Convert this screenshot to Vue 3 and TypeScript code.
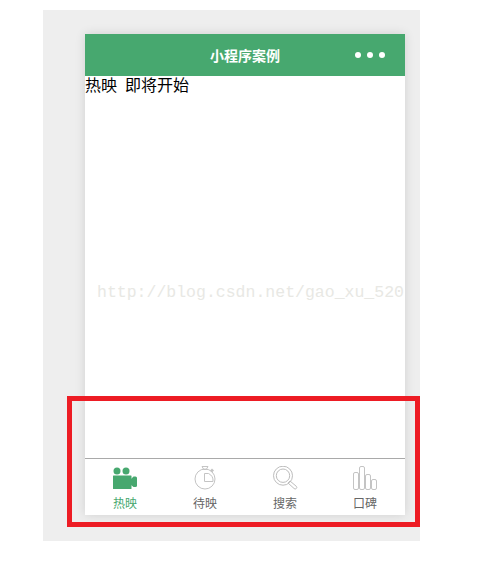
<template>
  <div class="shot">
    <div class="phone">
      <header class="nav">
        <span class="nav-title">小程序案例</span>
        <div class="nav-dots"><i></i><i></i><i></i></div>
      </header>
      <main class="content">
        <div class="line">热映 即将开始</div>
        <div class="watermark">http://blog.csdn.net/gao_xu_520</div>
      </main>
      <footer class="tabs">
        <div v-for="tab in tabs" :key="tab.name" class="tab" :class="{ active: tab.active }">
          <svg class="tab-icon" width="28" height="26" viewBox="0 0 28 26">
            <template v-if="tab.name === '热映'">
              <circle cx="6" cy="5" r="3.5" fill="#47a86f" />
              <circle cx="15" cy="5" r="3.5" fill="#47a86f" />
              <rect x="2" y="9.5" width="18.5" height="13.5" rx="0.5" fill="#47a86f" />
              <path d="M20 13l2.5-2.5h2a1.5 1.5 0 0 1 1.5 1.5v7.5a1.5 1.5 0 0 1-1.5 1.5h-2L20 19z" fill="#47a86f" />
            </template>
            <template v-else-if="tab.name === '待映'">
              <circle cx="14" cy="13" r="10" fill="none" stroke="#c4c4c4" />
              <path d="M11 0.5h6l-1.5 2.5v0.5h-3V3z" fill="none" stroke="#c4c4c4" />
              <path d="M13.5 7.5V15.5H22A8 8 0 0 0 17.5 7.5z" fill="none" stroke="#c4c4c4" />
              <path d="M19 4.5l2-2 2 2-2 2z" fill="#c4c4c4" />
            </template>
            <template v-else-if="tab.name === '搜索'">
              <circle cx="12" cy="9.7" r="9.5" fill="none" stroke="#bdbdbd" />
              <circle cx="12" cy="9.7" r="6.7" fill="none" stroke="#bdbdbd" />
              <path d="M17 17l2-2 6.3 5.3a1.5 1.5 0 0 1-2.2 2.2z" fill="none" stroke="#bdbdbd" />
            </template>
            <template v-else>
              <rect x="2.5" y="6.5" width="5" height="17" rx="1.5" fill="none" stroke="#c4c4c4" />
              <rect x="8.5" y="0.5" width="5" height="23" rx="1.5" fill="none" stroke="#c4c4c4" />
              <rect x="14.5" y="8.5" width="5" height="15" rx="1.5" fill="none" stroke="#c4c4c4" />
              <rect x="20.5" y="13.5" width="5" height="10" rx="1.5" fill="none" stroke="#c4c4c4" />
            </template>
          </svg>
          <span class="tab-name">{{ tab.name }}</span>
        </div>
      </footer>
    </div>
    <div class="highlight"></div>
  </div>
</template>

<script setup lang="ts">
interface Tab {
  name: string
  active?: boolean
}

const tabs: Tab[] = [
  { name: '热映', active: true },
  { name: '待映' },
  { name: '搜索' },
  { name: '口碑' }
]
</script>

<style>
html,
body {
  margin: 0;
  background: #fff;
}
</style>

<style scoped>
.shot {
  position: relative;
  box-sizing: border-box;
  width: 377px;
  height: 531px;
  margin: 10px 0 0 43px;
  padding: 24px 15px 0 42px;
  background: #eeeeee;
}

.phone {
  display: flex;
  flex-direction: column;
  width: 320px;
  height: 481px;
  background: #fff;
  box-shadow: 0 0 10px rgba(0, 0, 0, 0.12);
  font-family: "Noto Sans CJK SC", sans-serif;
}

.nav {
  position: relative;
  display: flex;
  align-items: center;
  justify-content: center;
  height: 42px;
  background: #47a86f;
  color: #fff;
}

.nav-title {
  font-size: 14px;
  font-weight: 700;
}

.nav-dots {
  position: absolute;
  right: 20px;
  top: 18px;
  display: flex;
  gap: 6px;
}

.nav-dots i {
  width: 6px;
  height: 6px;
  border-radius: 50%;
  background: #fff;
}

.content {
  position: relative;
  flex: 1;
  overflow: hidden;
}

.line {
  color: #000;
  font-size: 16px;
  line-height: 20px;
  word-spacing: 4px;
  font-family: "Liberation Serif", "Noto Sans CJK SC", serif;
}

.watermark {
  position: absolute;
  left: 12px;
  top: 205px;
  color: #e8e8e4;
  font-family: "Liberation Mono", monospace;
  font-size: 16.5px;
  line-height: 24px;
  white-space: nowrap;
}

.tabs {
  display: flex;
  box-sizing: border-box;
  height: 57px;
  border-top: 1px solid #a9a9a9;
}

.tab {
  display: flex;
  flex: 1;
  flex-direction: column;
  align-items: center;
  padding-top: 7px;
  color: #666;
}

.tab.active {
  color: #47a86f;
}

.tab-icon {
  display: block;
}

.tab-name {
  margin-top: 2px;
  font-size: 12px;
  line-height: 18px;
}

.highlight {
  position: absolute;
  left: 24px;
  top: 386px;
  width: 343px;
  height: 121px;
  border: 5px solid #ed1c24;
  pointer-events: none;
}
</style>
